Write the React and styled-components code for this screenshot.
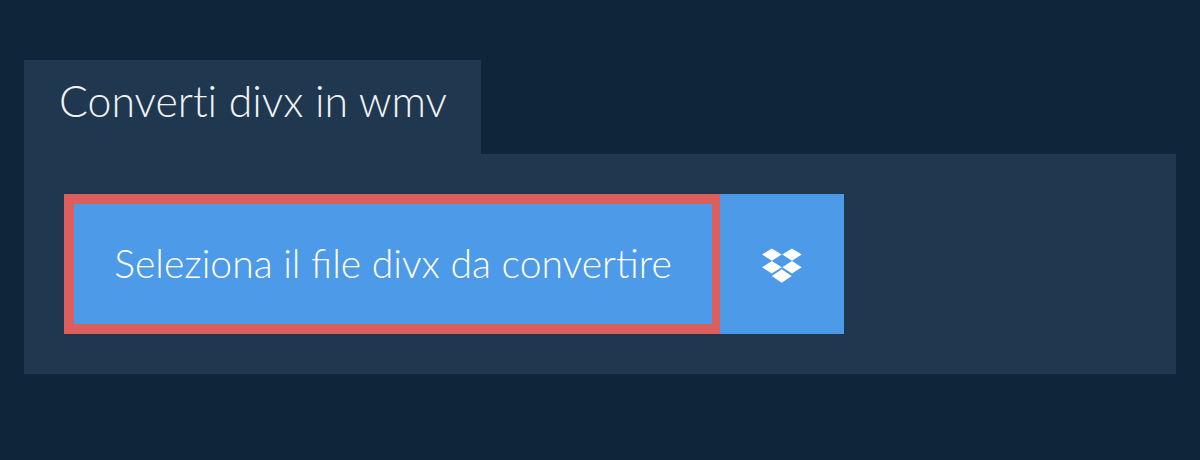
import React from "react";
import styled, { createGlobalStyle } from "styled-components";

const GlobalStyle = createGlobalStyle`
  html, body {
    margin: 0;
    padding: 0;
    background: #0f253a;
  }
`;

const Page = styled.div`
  box-sizing: border-box;
  width: 1200px;
  height: 460px;
  padding: 60px 24px 0;
  background: #0f253a;
  font-family: Lato, sans-serif;
`;

const Tab = styled.h1`
  box-sizing: border-box;
  width: 457px;
  height: 94px;
  margin: 0;
  padding: 14px 0 0 35px;
  background: #203750;
  color: #f1f3f5;
  font-size: 42.8px;
  line-height: 54px;
  font-weight: 300;
  font-variant-ligatures: none;
`;

const Panel = styled.div`
  display: flex;
  height: 220px;
  box-sizing: border-box;
  padding: 40px;
  background: #203750;
`;

const SelectButton = styled.button`
  box-sizing: border-box;
  width: 656px;
  height: 140px;
  padding: 0 0 3px;
  border: solid #dc5f5d;
  border-width: 10px 8px 10px 10px;
  background: #4d9ae8;
  color: #fff;
  font-family: inherit;
  font-size: 39.1px;
  font-weight: 300;
`;

const DropboxButton = styled.button`
  display: flex;
  align-items: center;
  justify-content: center;
  width: 124px;
  height: 140px;
  padding: 3px 0 0;
  border: 0;
  background: #4d9ae8;
  color: #fff;
`;

const DropboxIcon = () => (
  <svg width="40" height="35" viewBox="0 0 40 35" fill="currentColor">
    <path d="M0 6.5 9.8.5l9.9 6-9.9 6.2z" />
    <path d="M20.3 6.5 30 .5l9.7 6-9.7 6.2z" />
    <path d="M0 19.3 9.8 13l9.9 6.3-9.9 6.3z" />
    <path d="M20.3 19.3 30 13l9.7 6.3-9.7 6.3z" />
    <path d="M9.8 28l9.9-6.7 10 6.7-10 6.7z" />
  </svg>
);

export default function App() {
  return (
    <>
      <GlobalStyle />
      <Page>
        <Tab>Converti divx in wmv</Tab>
        <Panel>
          <SelectButton>Seleziona il file divx da convertire</SelectButton>
          <DropboxButton>
            <DropboxIcon />
          </DropboxButton>
        </Panel>
      </Page>
    </>
  );
}
